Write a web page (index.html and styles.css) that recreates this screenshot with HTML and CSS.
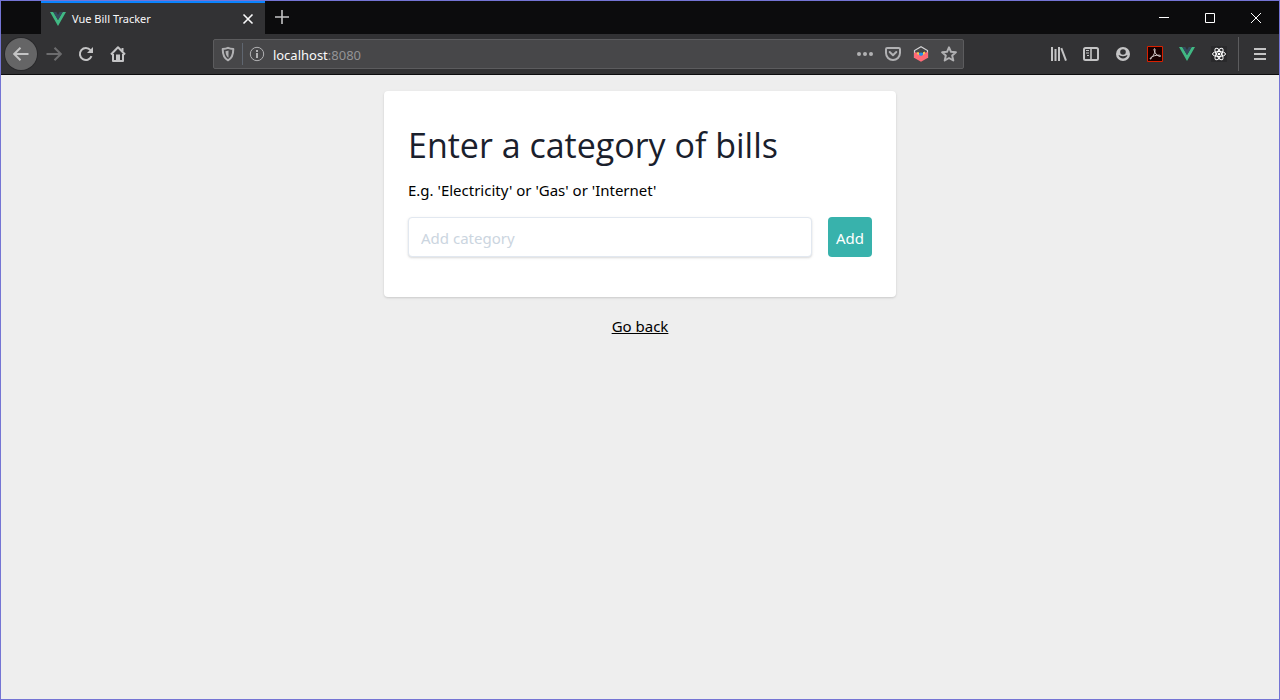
FILE: index.html
```
<!DOCTYPE html>
<html lang="en">
<head>
<meta charset="utf-8">
<title>Vue Bill Tracker</title>
<link rel="stylesheet" href="styles.css">
</head>
<body>
<div class="window">
  <header class="tabstrip">
    <div class="tab">
      <svg class="icon" width="16" height="16" viewBox="0 0 16 16"><path d="M0 1h3.300L8 9l4.700-8H16L8 15z" fill="#41b883"/><path d="M3.300 1H6.300L8 4l1.700-3h3L8 9z" fill="#35495e"/></svg>
      <span class="tab-title">Vue Bill Tracker</span>
      <button class="tab-close" aria-label="Close tab"><svg width="12" height="12" viewBox="0 0 12 12"><path d="M1.500 1.500l9 9M10.500 1.500l-9 9" stroke="#f9f9fa" stroke-width="1.600"/></svg></button>
    </div>
    <button class="new-tab" aria-label="New tab"><svg width="14" height="14" viewBox="0 0 14 14"><path d="M7 0v14M0 7h14" stroke="#c4c4c5" stroke-width="1.600"/></svg></button>
    <div class="window-controls">
      <button class="control" aria-label="Minimize"><svg width="10" height="10" viewBox="0 0 10 10"><path d="M0 4.500h10" stroke="#fff"/></svg></button>
      <button class="control" aria-label="Maximize"><svg width="10" height="10" viewBox="0 0 10 10"><path d="M.5.5h9v9h-9z" fill="none" stroke="#fff"/></svg></button>
      <button class="control" aria-label="Close window"><svg width="10" height="10" viewBox="0 0 10 10"><path d="M0 0l10 10M10 0L0 10" stroke="#fff"/></svg></button>
    </div>
  </header>
  <nav class="toolbar" aria-label="Browser">
    <button class="tool back" aria-label="Back"><svg class="line" width="16" height="16" viewBox="0 0 16 16"><path d="M15.500 8H1.500M7.500 1.700L1.200 8l6.300 6.300"/></svg></button>
    <button class="tool forward" aria-label="Forward"><svg class="line" width="16" height="16" viewBox="0 0 16 16"><path d="M.5 8h14M8.500 1.700L14.800 8l-6.300 6.300"/></svg></button>
    <button class="tool" aria-label="Reload"><svg class="line" width="16" height="16" viewBox="0 0 16 16"><path d="M13.500 10.200A6 6 0 1 1 12.500 4.200"/><path d="M15 1v6H9z" fill="#c4c4c5" stroke="none"/></svg></button>
    <button class="tool" aria-label="Home"><svg class="line" width="16" height="16" viewBox="0 0 16 16"><path d="M1 8.500L8 1.300l7 7.200M3 8v7h10V8" stroke-linejoin="round"/><path d="M7 15V9.500h2V15M12.500 2v3"/></svg></button>
    <div class="spacer"></div>
    <div class="urlbar">
      <button class="url-button" aria-label="Tracking protection"><svg class="line" width="16" height="16" viewBox="0 0 16 16"><path d="M8 1.800C6 2.700 4 2.900 2.700 3c0 5 .8 9 5.300 11.300 4.500-2.300 5.300-6.300 5.300-11.300C12 2.900 10 2.700 8 1.800z" stroke-linejoin="round"/><path d="M8.500 4.500c-1.200.4-2.200.6-3 .7C5.700 8 6.300 10.300 8.500 11.700z" fill="#b1b1b3" stroke="none"/></svg></button>
      <span class="url-divider"></span>
      <button class="url-button" aria-label="Site information"><svg class="line thin" width="16" height="16" viewBox="0 0 16 16"><circle cx="8" cy="8" r="6.700"/><path d="M8 7v5M8 4v2" stroke-width="2"/></svg></button>
      <span class="url"><span class="host">localhost</span>:8080</span>
      <button class="url-button" aria-label="Page actions"><svg width="16" height="16" viewBox="0 0 16 16" fill="#b1b1b3"><circle cx="2" cy="8" r="2"/><circle cx="8" cy="8" r="2"/><circle cx="14" cy="8" r="2"/></svg></button>
      <button class="url-button" aria-label="Save to Pocket"><svg class="line" width="16" height="16" viewBox="0 0 16 16"><path d="M2.300 2h11.400c.8 0 1.300.5 1.300 1.300V7A7 7 0 0 1 1 7V3.300C1 2.500 1.500 2 2.300 2zM4.700 6L8 9.300 11.300 6" stroke-linecap="round" stroke-linejoin="round"/></svg></button>
      <button class="url-button" aria-label="Extension"><svg width="16" height="16" viewBox="0 0 16 16"><path d="M1.500 12V4.500L8 .8l6.500 3.700V12" fill="none" stroke="#d5d5d7" stroke-width="1.200"/><path d="M1 7c1.500-1 2.500-.8 3.500 0L8 9l3.500-2c1-1 2-1 3.500-.5v5.300L8 15.800l-7-4z" fill="#ff6b77"/><path d="M4 6.300h2V9L4 8z" fill="#f4ca52"/><path d="M6 7l2-.5L10 7v2L8 10 6 9z" fill="#2090e5"/><path d="M10 6.300l2-.8v2L10 9z" fill="#f4ca52"/></svg></button>
      <button class="url-button" aria-label="Bookmark this page"><svg class="line" width="16" height="16" viewBox="0 0 16 16"><path d="M8 1.300l2 4.500 4.900.5-3.700 3.300 1.100 4.900L8 12l-4.300 2.500 1.100-4.900L1.100 6.300 6 5.800z" stroke-linejoin="round"/></svg></button>
    </div>
    <div class="spacer"></div>
    <button class="tool" aria-label="Library"><svg class="line" width="16" height="16" viewBox="0 0 16 16"><path d="M1 1v14M4.500 3v12M8 1v14" /><path d="M10.300 2.200L15 14.700"/></svg></button>
    <button class="tool" aria-label="Sidebars"><svg class="line" width="16" height="16" viewBox="0 0 16 16"><rect x="1" y="2" width="14" height="12" rx="1.500"/><path d="M8 2v12" stroke-width="1.600"/><path d="M3 4.500h3M3 7h3M4 9.500h2" stroke-width="1"/></svg></button>
    <button class="tool" aria-label="Account"><svg width="16" height="16" viewBox="0 0 16 16"><circle cx="8" cy="8" r="7" fill="#c4c4c5"/><circle cx="8" cy="6" r="2.800" fill="#323234"/><path d="M3.500 9c1 4.500 8 4.500 9 0-1.400.2-2 1.300-4.500 1.300S4.900 9.200 3.500 9z" fill="#323234"/></svg></button>
    <button class="tool" aria-label="PDF"><svg width="16" height="16" viewBox="0 0 16 16"><path d="M.5.500h15v15H.5z" fill="#190000" stroke="#d92000"/><path d="M3 13C5 12 8.500 7 8 3.300c-.2-1.200-1.300-.7-1 .5C7.600 7 10 10 13 10.500c1 0 .8-1.300-.7-1.300C9 9 5.500 10 3.500 11.800c-1 1 .2 1.600 1 .6" fill="none" stroke="#d8cece" stroke-width="1"/></svg></button>
    <button class="tool" aria-label="Vue devtools"><svg width="16" height="16" viewBox="0 0 16 16"><path d="M0 1h3.300L8 9l4.700-8H16L8 15z" fill="#41b883"/><path d="M3.300 1H6.300L8 4l1.700-3h3L8 9z" fill="#35495e"/></svg></button>
    <button class="tool" aria-label="React devtools"><svg width="16" height="16" viewBox="0 0 16 16"><path d="M0 0h16v16H0z" fill="#29292b"/><g fill="none" stroke="#fff"><ellipse cx="8" cy="8" rx="6.500" ry="2.500"/><ellipse cx="8" cy="8" rx="6.500" ry="2.500" transform="rotate(60 8 8)"/><ellipse cx="8" cy="8" rx="6.500" ry="2.500" transform="rotate(120 8 8)"/></g><circle cx="8" cy="8" r="1.300" fill="#fff"/></svg></button>
    <span class="tool-divider"></span>
    <button class="tool" aria-label="Open menu"><svg class="line" width="16" height="16" viewBox="0 0 16 16"><path d="M2 3h12M2 8h12M2 13h12"/></svg></button>
  </nav>
  <main class="page">
    <form class="card">
      <h1 class="heading">Enter a category of bills</h1>
      <label class="hint" for="category">E.g. 'Electricity' or 'Gas' or 'Internet'</label>
      <div class="row">
        <input class="field" id="category" type="text" placeholder="Add category">
        <button class="add" type="button">Add</button>
      </div>
    </form>
    <a class="go-back" href="#">Go back</a>
  </main>
</div>
</body>
</html>
```

FILE: styles.css
```
* {
  box-sizing: border-box;
}

body {
  margin: 0;
  font-family: "Noto Sans", "Open Sans", sans-serif;
}

button {
  border: 0;
  padding: 0;
  background: transparent;
  font: inherit;
}

svg {
  display: block;
}

.window {
  display: flex;
  flex-direction: column;
  min-height: 100vh;
  border: 1px solid #7474d4;
  background: #eee;
}

.tabstrip {
  display: flex;
  height: 33px;
  padding-left: 40px;
  background: #0c0c0d;
}

.tab {
  display: flex;
  align-items: center;
  gap: 6px;
  width: 224px;
  padding: 0 11px 0 9px;
  border-top: 2px solid #0a84ff;
  background: #323234;
  color: #f9f9fa;
}

.tab-title {
  flex: 1;
  font-size: 11px;
}

.new-tab {
  display: grid;
  place-items: center;
  width: 34px;
  padding-bottom: 1px;
}

.window-controls {
  display: flex;
  margin-left: auto;
}

.control {
  display: grid;
  place-items: center;
  width: 46px;
}

.toolbar {
  display: flex;
  align-items: center;
  height: 41px;
  padding: 0 3px 0 4px;
  border-bottom: 1px solid #0c0c0d;
  background: #323234;
}

.tool {
  display: grid;
  flex: none;
  place-items: center;
  width: 32px;
  height: 32px;
}

.back {
  margin-right: 1px;
  border-radius: 50%;
  background: #656566;
  box-shadow: 0 0 0 1px #29292b;
}

.forward {
  opacity: 0.4;
}

.line {
  fill: none;
  stroke: #c4c4c5;
  stroke-width: 2;
}

.thin {
  stroke-width: 1;
}

.spacer {
  flex: 2;
}

.urlbar {
  display: flex;
  flex: 19;
  align-items: center;
  height: 30px;
  border: 1px solid #5c5c5e;
  border-radius: 2px;
  background: #474749;
}

.url-button {
  display: grid;
  flex: none;
  place-items: center;
  width: 28px;
  height: 28px;
}

.urlbar .line {
  stroke: #b1b1b3;
}

.url-divider {
  width: 1px;
  height: 22px;
  background: #5f6670;
}

.url {
  flex: 1;
  padding: 2px 0 0 2px;
  color: #949496;
  font-size: 13px;
}

.host {
  color: #f9f9fa;
}

.tool-divider {
  width: 1px;
  height: 34px;
  margin: 0 5px 0 3px;
  background: #5c5c5e;
}

.page {
  display: flex;
  flex: 1;
  flex-direction: column;
  align-items: center;
  gap: 16px;
  padding: 16px;
}

.card {
  width: 100%;
  max-width: 512px;
  padding: 24px 24px 40px;
  border-radius: 4px;
  background: #fff;
  box-shadow: 0 1px 3px rgba(0, 0, 0, 0.1), 0 1px 2px rgba(0, 0, 0, 0.06);
}

.heading {
  margin: 0;
  color: #1a202c;
  font-family: "Open Sans", sans-serif;
  font-size: 34px;
  font-weight: 400;
  line-height: 60px;
}

.hint {
  display: block;
  padding-top: 2px;
  margin-bottom: 14px;
  font-size: 15px;
  line-height: 26px;
}

.row {
  display: flex;
  gap: 16px;
}

.field {
  flex: 1;
  min-width: 0;
  height: 40px;
  padding: 2px 12px 0;
  border: 1px solid #e2e8f0;
  border-radius: 4px;
  box-shadow: 0 1px 3px rgba(0, 0, 0, 0.1), 0 1px 2px rgba(0, 0, 0, 0.06);
  font: inherit;
  font-size: 15px;
}

.field::placeholder {
  color: #cbd5e0;
}

.add {
  height: 40px;
  padding: 2px 8px 0;
  border-radius: 4px;
  background: #38b2ac;
  color: #fff;
  font-size: 15px;
}

.go-back {
  color: #000;
  font-size: 15px;
  line-height: 26px;
}
```
